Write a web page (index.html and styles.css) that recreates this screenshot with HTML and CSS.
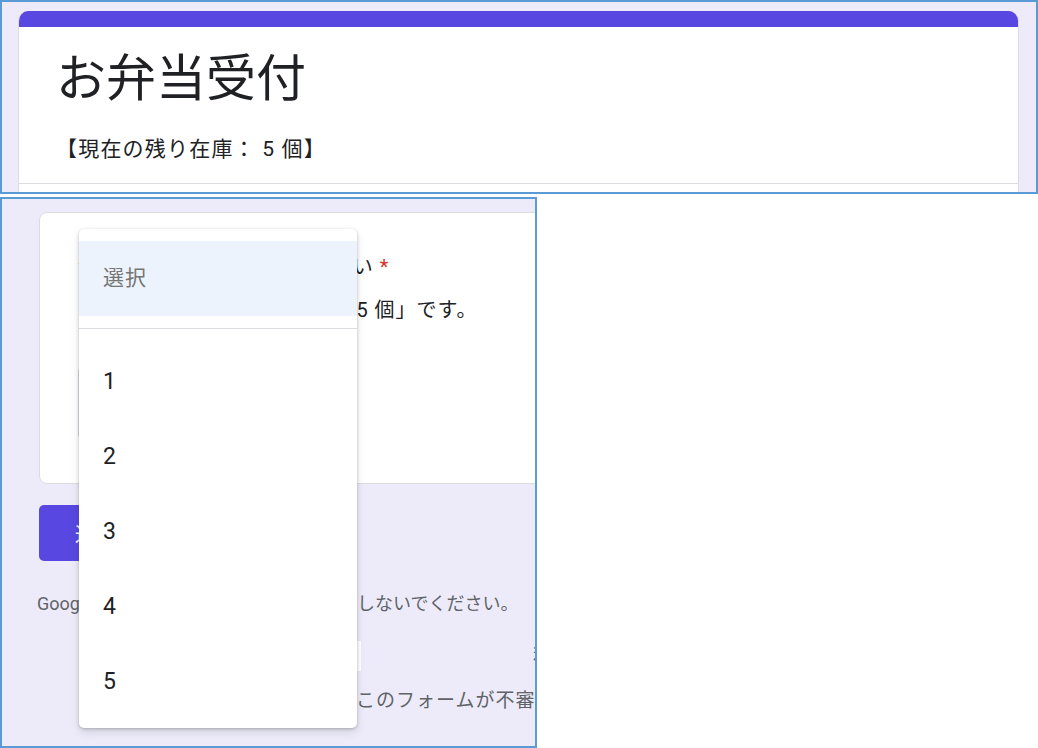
FILE: index.html
```html
<!DOCTYPE html>
<html lang="ja">
<head>
  <meta charset="UTF-8">
  <meta name="viewport" content="width=device-width, initial-scale=1.0">
  <title>お弁当受付</title>
  <link rel="stylesheet" href="styles.css">
</head>
<body>
  <div class="shot shot-top">
    <div class="head-card">
      <div class="head-bar"></div>
      <div class="head-body">
        <h1 class="form-title">お弁当受付</h1>
        <p class="form-desc">【現在の残り在庫： 5 個】</p>
      </div>
      <div class="head-foot">* 必須の質問です</div>
    </div>
  </div>

  <div class="shot shot-form">
    <div class="form-inner">
      <div class="q-card">
        <div class="q-title">注文の個数を選択してくださ<span class="tail">い</span><span class="req"> *</span></div>
        <div class="q-desc">おひとり様のご注文上限は「5 個」です。</div>
        <div class="select-box"></div>
      </div>
      <button class="submit-btn">送信</button>
      <p class="note"><span class="note-head">Google フォームでパスワードを送信</span>しないでください。</p>
      <div class="links">
        <span class="frag frag-left">者</span>
        <span class="frag frag-right">利</span>
      </div>
      <p class="report">このフォームが不審な場合は報告してください</p>
    </div>

    <ul class="menu">
      <li class="menu-item placeholder">選択</li>
      <li class="menu-sep"></li>
      <li class="menu-item">1</li>
      <li class="menu-item">2</li>
      <li class="menu-item">3</li>
      <li class="menu-item">4</li>
      <li class="menu-item">5</li>
    </ul>
  </div>
</body>
</html>
```

FILE: styles.css
```css
/* Global */
body {
  margin: 0;
  font-family: Roboto, "Noto Sans CJK JP", sans-serif;
  background: #fff;
  color: #202124;
}
.shot {
  box-sizing: border-box;
  border: 2px solid #5b9bd5;
  background: #edebfa;
  overflow: hidden;
}
/* Top capture: form header */
.shot-top {
  width: 1038px;
  height: 194px;
  padding: 9px 0 0 16px;
}
.head-card {
  width: 999px;
  background: #fff;
  border: 1px solid #dadce0;
  border-top: none;
  border-radius: 10px 10px 0 0;
  overflow: hidden;
}
.head-bar {
  height: 16px;
  background: #5847e1;
}
.head-body {
  padding: 17px 37px 19px;
  border-bottom: 1px solid #dadce0;
}
.form-title {
  margin: 0;
  font-family: "Noto Sans CJK JP", sans-serif;
  font-size: 50px;
  font-weight: 400;
  line-height: 60px;
  color: #202124;
}
.form-desc {
  margin: 30px 0 0;
  font-size: 21px;
  letter-spacing: 1.2px;
  line-height: 30px;
}
.head-foot {
  padding: 12px 37px;
  font-size: 18px;
  color: #d93025;
}
/* Bottom capture: question + open dropdown */
.shot-form {
  position: relative;
  width: 537px;
  height: 551px;
  margin-top: 3px;
  padding: 13px 0 0 37px;
}
.form-inner { width: 1000px; }
.q-card {
  background: #fff;
  border: 1px solid #dadce0;
  border-radius: 8px;
  padding: 39px 36px 44px 38px;
}
.q-title, .q-desc {
  font-size: 20px;
  letter-spacing: 1px;
  line-height: 30px;
}
.q-title .tail { margin-left: 3px; }
.q-desc { margin-top: 13px; padding-left: 6px; }
.req { color: #d93025; }
.select-box {
  margin-top: 42px;
  width: 260px;
  height: 72px;
  box-sizing: border-box;
  border: 1px solid #dadce0;
  border-radius: 4px;
}
.submit-btn {
  display: block;
  margin-top: 21px;
  height: 56px;
  padding: 0 36px;
  border: none;
  border-radius: 5px;
  background: #5847e1;
  color: #fff;
  font-family: inherit;
  font-size: 20px;
}
.note {
  margin: 28px 0 0 -2px;
  font-size: 18px;
  line-height: 30px;
  color: #5f6368;
  white-space: nowrap;
}
.note-head {
  display: inline-block;
  width: 320px;
  overflow: hidden;
  vertical-align: top;
}
.links {
  position: relative;
  height: 30px;
  margin-top: 22px;
  font-size: 19px;
  line-height: 30px;
  color: #5f6368;
}
.frag {
  position: absolute;
  top: 0;
}
.frag-left { left: 299px; background: #fff; padding: 0 4px 0 0; }
.frag-right { left: 494px; }
.report {
  margin: 15px 0 0 317px;
  font-size: 19px;
  letter-spacing: 1px;
  line-height: 30px;
  color: #5f6368;
}
.menu {
  position: absolute;
  left: 77px;
  top: 30px;
  width: 278px;
  margin: 0;
  padding: 12px 0;
  list-style: none;
  background: #fff;
  border-radius: 5px;
  box-shadow: 0 1px 3px rgba(60, 64, 67, 0.3), 0 4px 8px rgba(60, 64, 67, 0.15);
}
.menu-item {
  box-sizing: border-box;
  height: 75px;
  padding: 5px 0 0 24px;
  display: flex;
  align-items: center;
  font-size: 23px;
  color: #202124;
}
.menu-item.placeholder {
  padding: 0 0 6px 24px;
  background: #edf3fc;
  font-size: 21px;
  letter-spacing: 1px;
  color: #757575;
}
.menu-sep {
  margin: 12px 0;
  border-top: 1px solid #dadce0;
}
```
